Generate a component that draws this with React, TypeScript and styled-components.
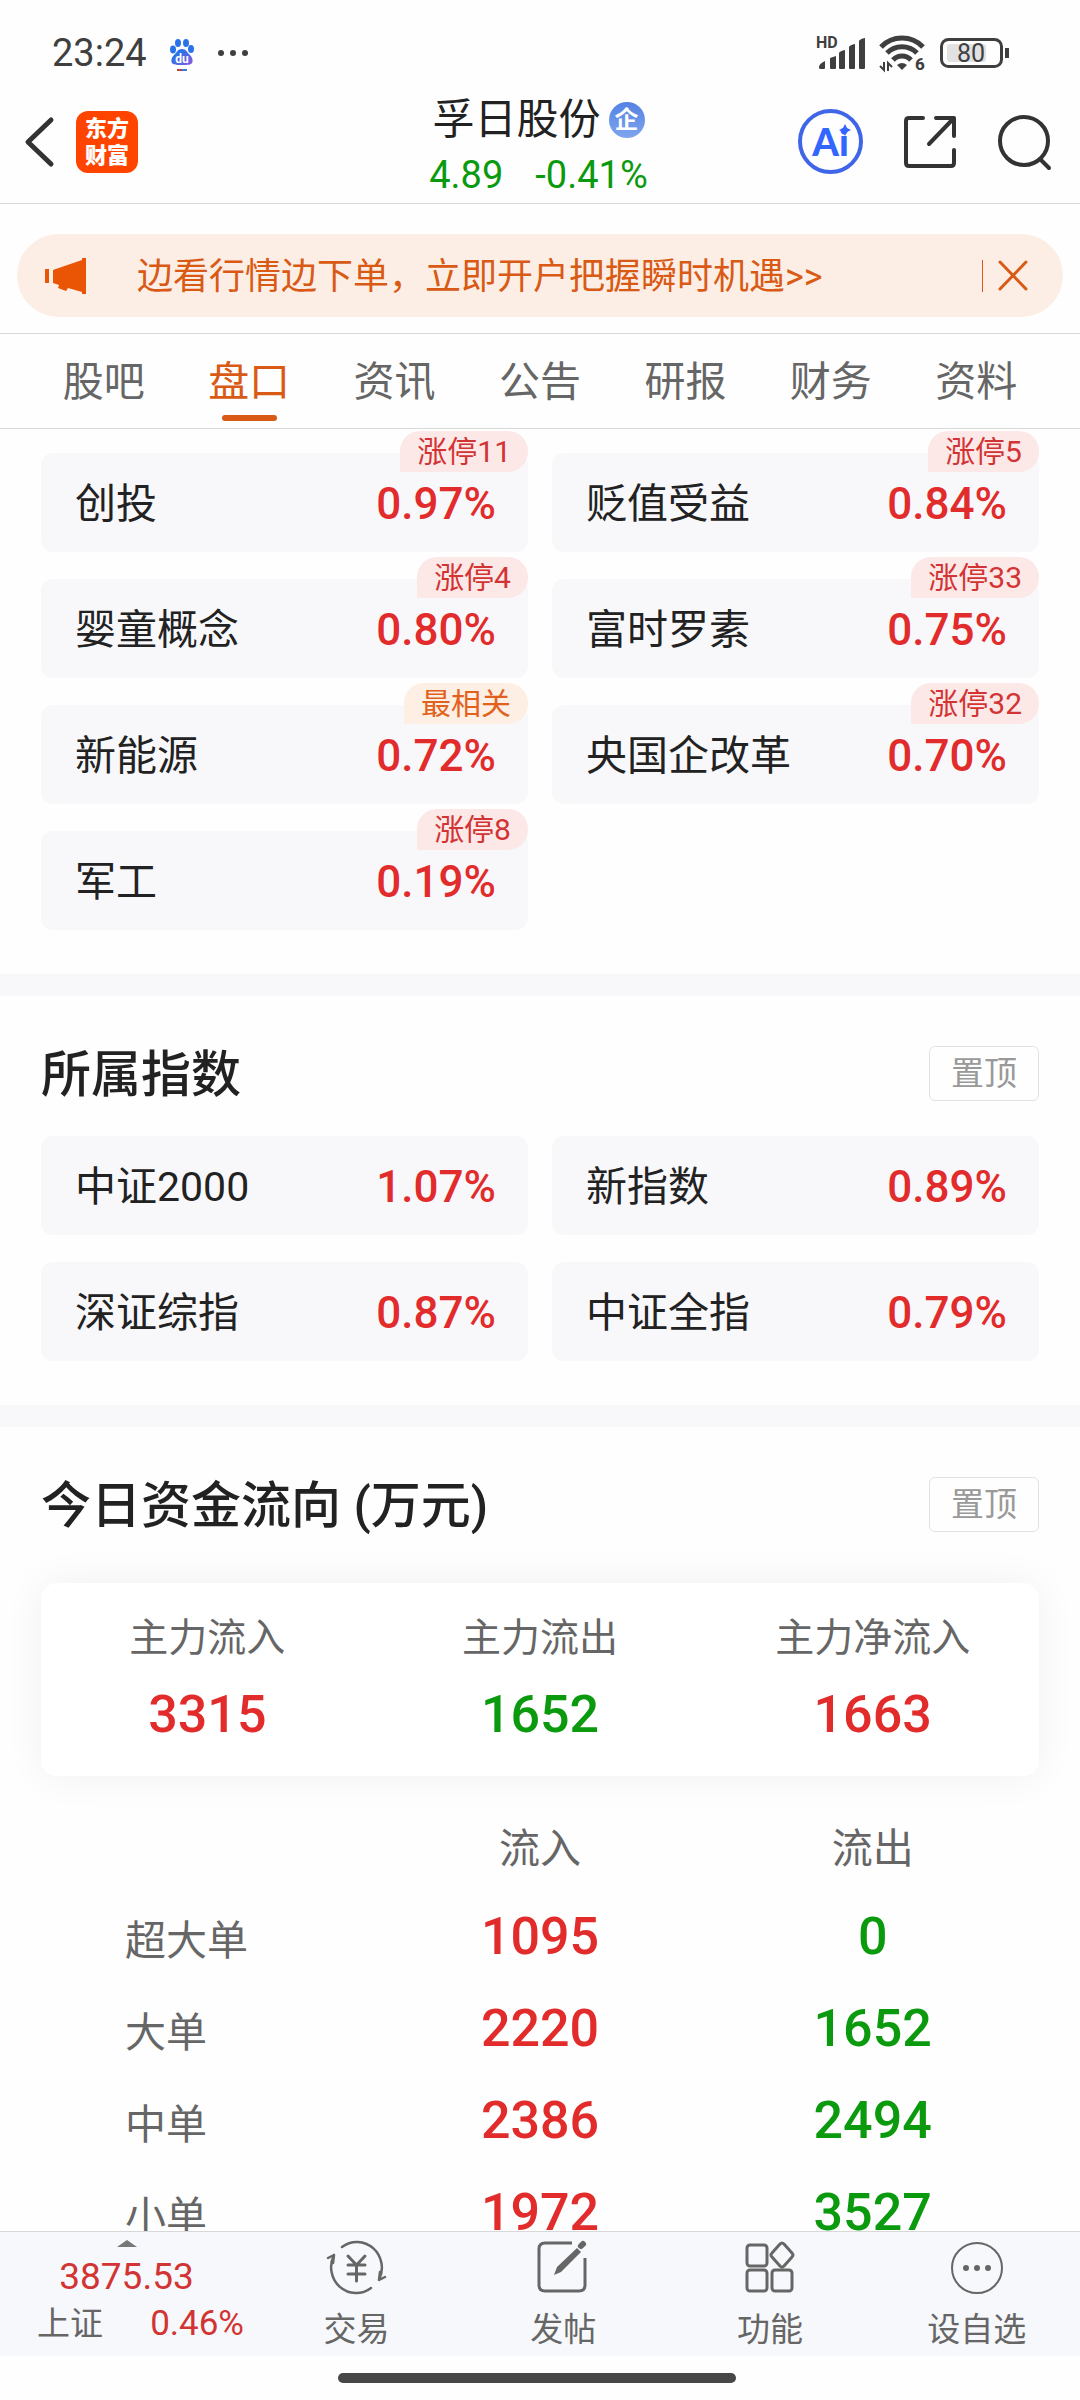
import React from "react";
import styled, { createGlobalStyle } from "styled-components";

const RED = "#e22b2b";
const GREEN = "#0b9a0e";
const ORANGE = "#d95a14";
const INK = "#222222";
const GREY = "#666666";
const PANEL = "#f8f8fb";
const LINE = "#d8d8d8";

type Tone = "up" | "down";
const toneColor = (tone: Tone) => (tone === "up" ? RED : GREEN);

const GlobalStyle = createGlobalStyle`
  * { box-sizing: border-box; }
  body {
    margin: 0;
    background: #fefefe;
    color: ${INK};
    font-family: Roboto, "Noto Sans CJK SC", sans-serif;
  }
  button { border: 0; padding: 0; background: none; font: inherit; color: inherit; cursor: pointer; }
  a { color: inherit; text-decoration: none; }
  h1, h2, p, dl, dd { margin: 0; font-weight: inherit; font-size: inherit; }
  svg { display: block; flex: none; overflow: visible; }
`;

const Screen = styled.div`
  display: flex;
  flex-direction: column;
  height: 100vh;
`;

const StatusBar = styled.div`
  display: flex;
  align-items: center;
  height: 92px;
  padding: 14px 71px 0 52px;
  color: #3f3f3f;
`;

const Clock = styled.time`
  font-size: 38px;
  line-height: 48px;
`;

const AppMark = styled.span`
  margin: 0 18px;
`;

const StatusIcons = styled.div`
  display: flex;
  align-items: center;
  gap: 12px;
  margin-left: auto;
`;

const Header = styled.header`
  display: grid;
  grid-template-columns: 1fr auto 1fr;
  padding: 0 27px 0 24px;
  border-bottom: 1px solid ${LINE};
`;

const HeaderSide = styled.div<{ $end?: boolean }>`
  display: flex;
  align-items: center;
  justify-content: ${(p) => (p.$end ? "flex-end" : "flex-start")};
  gap: ${(p) => (p.$end ? "40px" : "22px")};
  padding-bottom: 12px;
`;

const BrandLogo = styled.a`
  display: flex;
  flex-direction: column;
  align-items: center;
  justify-content: center;
  width: 62px;
  height: 62px;
  border-radius: 12px;
  background: #ff4400;
  color: #fff;
  font-size: 22px;
  font-weight: 900;
  line-height: 27px;
`;

const Quote = styled.div`
  display: flex;
  flex-direction: column;
  align-items: center;
`;

const StockName = styled.h1`
  display: flex;
  align-items: center;
  gap: 8px;
  font-size: 42px;
  line-height: 56px;
`;

const CompanyBadge = styled.span`
  width: 36px;
  height: 36px;
  border-radius: 50%;
  background: linear-gradient(#5482e4, #7fa5ec);
  color: #fff;
  font-size: 24px;
  font-weight: 700;
  line-height: 36px;
  text-align: center;
`;

const Price = styled.p`
  display: flex;
  gap: 32px;
  color: ${GREEN};
  font-size: 38px;
  line-height: 55px;
`;

const AiButton = styled.button`
  position: relative;
  width: 65px;
  height: 65px;
  border: 4px solid #3f66e8;
  border-radius: 50%;
  color: #3366ff;
  font-family: Lato, sans-serif;
  font-size: 38px;
  font-weight: 900;
  line-height: 57px;
  text-align: center;

  svg { position: absolute; top: 11px; right: 8px; }
`;

const BannerArea = styled.div`
  padding: 30px 17px 16px;
  border-bottom: 1px solid ${LINE};
`;

const Banner = styled.div`
  display: flex;
  align-items: center;
  height: 83px;
  padding: 0 35px 0 28px;
  border-radius: 42px;
  background: #fceee5;
  color: ${ORANGE};
`;

const BannerLink = styled.a`
  flex: 1;
  margin-left: 51px;
  padding-top: 3px;
  font-size: 36px;
  line-height: 54px;
`;

const BannerClose = styled.button`
  padding-left: 15px;
  border-left: 1px solid ${ORANGE};
`;

const Tabs = styled.nav`
  display: flex;
  height: 95px;
  padding: 0 31px;
  border-bottom: 1px solid ${LINE};
`;

const Tab = styled.a<{ $active: boolean }>`
  position: relative;
  flex: 1;
  color: ${(p) => (p.$active ? ORANGE : GREY)};
  font-size: 41px;
  line-height: 96px;
  text-align: center;

  &::after {
    content: "";
    display: ${(p) => (p.$active ? "block" : "none")};
    position: absolute;
    bottom: 7px;
    left: 50%;
    width: 55px;
    height: 6px;
    margin-left: -27px;
    border-radius: 3px;
    background: ${ORANGE};
  }
`;

const Content = styled.main`
  flex: 1;
  min-height: 0;
  overflow: hidden;
`;

const Section = styled.section<{ $first?: boolean }>`
  padding: ${(p) => (p.$first ? "24px" : "50px")} 41px 44px;

  & + & { border-top: 22px solid ${PANEL}; }
`;

const SectionHead = styled.div<{ $gap: number }>`
  display: flex;
  align-items: center;
  justify-content: space-between;
  margin-bottom: ${(p) => p.$gap}px;
`;

const SectionTitle = styled.h2`
  padding-top: 4px;
  font-size: 50px;
  font-weight: 500;
  line-height: 51px;
`;

const PinButton = styled.button`
  width: 110px;
  height: 55px;
  border: 1px solid #e2e2e2;
  border-radius: 6px;
  color: #999;
  font-size: 33px;
  line-height: 53px;
`;

const ChipGrid = styled.div`
  display: grid;
  grid-template-columns: 1fr 1fr;
  gap: 27px 24px;
`;

const Chip = styled.a`
  position: relative;
  display: flex;
  align-items: center;
  justify-content: space-between;
  height: 99px;
  padding: 2px 32px 0 34px;
  border-radius: 12px;
  background: ${PANEL};
  font-size: 41px;
  line-height: 58px;
`;

const ChipValue = styled.span`
  color: ${RED};
  font-size: 44px;
  font-weight: 500;
`;

const ChipBadge = styled.span<{ $related: boolean }>`
  position: absolute;
  top: -22px;
  right: 0;
  height: 41px;
  padding: 0 17px;
  border-radius: 20px 20px 20px 0;
  background: ${(p) => (p.$related ? "#feefe4" : "#fde8e8")};
  color: ${(p) => (p.$related ? "#e0621c" : "#d23434")};
  font-size: 30px;
  line-height: 41px;
`;

const FlowCard = styled.dl`
  display: grid;
  grid-template-columns: repeat(3, 1fr);
  height: 193px;
  padding-top: 26px;
  border-radius: 16px;
  background: #fff;
  box-shadow: 0 0 40px rgba(0, 0, 0, 0.06);
  text-align: center;
`;

const FlowLabel = styled.dt`
  color: ${GREY};
  font-size: 39px;
  line-height: 58px;
`;

const FlowValue = styled.dd<{ $tone: Tone }>`
  padding-top: 15px;
  color: ${(p) => toneColor(p.$tone)};
  font-size: 52px;
  font-weight: 500;
  line-height: 66px;
`;

const FlowTable = styled.table`
  width: 100%;
  margin-top: 23px;
  border-collapse: collapse;
  table-layout: fixed;
`;

const HeadCell = styled.th`
  height: 92px;
  padding: 0;
  color: ${GREY};
  font-size: 41px;
  font-weight: 400;
`;

const RowLabel = styled(HeadCell)`
  padding-left: 84px;
  text-align: left;
`;

const AmountCell = styled.td<{ $tone: Tone }>`
  height: 92px;
  padding: 0;
  color: ${(p) => toneColor(p.$tone)};
  font-size: 52px;
  font-weight: 500;
  line-height: 66px;
  text-align: center;
`;

const BottomBar = styled.nav`
  display: flex;
  height: 125px;
  border-top: 1px solid ${LINE};
  background: #f7f8fb;
  color: ${GREY};
`;

const IndexLink = styled.a`
  flex: 0 0 253px;
  padding-top: 8px;
`;

const IndexArrow = styled.svg`
  margin: 0 auto;
`;

const IndexPoints = styled.div`
  color: #d23434;
  font-size: 37px;
  line-height: 60px;
  text-align: center;
`;

const IndexRow = styled.div`
  display: flex;
  justify-content: space-between;
  padding: 0 9px 0 37px;
  font-size: 33px;
  line-height: 34px;
`;

const IndexChange = styled.span`
  color: #d23434;
  font-size: 35px;
`;

const Action = styled.button`
  display: flex;
  flex: 1;
  flex-direction: column;
  align-items: center;
  padding-top: 7px;
  font-size: 33px;
  line-height: 48px;

  svg { margin-bottom: 11px; }
`;

const HomeArea = styled.div`
  display: flex;
  justify-content: center;
  height: 44px;
  padding: 17px 6px 0 0;
`;

const HomeBar = styled.div`
  width: 37%;
  height: 10px;
  border-radius: 5px;
  background: #474747;
`;

const PawIcon = () => (
  <svg width="34" height="36" viewBox="0 0 34 36" aria-hidden="true">
    <defs>
      <linearGradient id="paw" x1="0" y1="0" x2="1" y2="1">
        <stop offset="0.3" stopColor="#2a72e8" />
        <stop offset="1" stopColor="#8a5be0" />
      </linearGradient>
    </defs>
    <g fill="#2a72e8">
      <ellipse cx="8" cy="14.500" rx="3" ry="4" />
      <ellipse cx="13" cy="8" rx="3" ry="4" />
      <ellipse cx="21" cy="8" rx="3" ry="4" />
      <ellipse cx="26" cy="14" rx="3" ry="4" />
    </g>
    <path d="M17 14c4 0 5 3 7 5 3 3 4 5 3.500 8-1 3-4 3-10.500 3s-9.500 0-10.500-3c-.5-3 .5-5 3.500-8 2-2 3-5 7-5z" fill="url(#paw)" />
    <text x="17" y="28" textAnchor="middle" fontSize="12" fontWeight="700" fill="#fff">du</text>
    <path d="M12 35h5" stroke="#b8434b" strokeWidth="2" />
    <path d="M17 35h5" stroke="#3f78d6" strokeWidth="2" />
  </svg>
);

const DotsIcon = () => (
  <svg width="32" height="8" viewBox="0 0 32 8" fill="#3f3f3f" aria-hidden="true">
    <circle cx="4" cy="4" r="3" />
    <circle cx="16" cy="4" r="3" />
    <circle cx="28" cy="4" r="3" />
  </svg>
);

const SignalIcon = () => (
  <svg width="50" height="34" viewBox="0 0 50 34" fill="#3f3f3f" aria-hidden="true">
    <text x="-1" y="12" fontSize="16" fontWeight="700">HD</text>
    <path d="M2 31q0-3 6-6v7q0 1-1 1H3q-1 0-1-2zM13 22l6-2v12q0 1-1 1h-4q-1 0-1-1zM22 17q1-2 6-3v18q0 1-1 1h-4q-1 0-1-1zM32 11q1-2 6-3v24q0 1-1 1h-4q-1 0-1-1zM42 5q1-2 6-3v30q0 1-1 1h-4q-1 0-1-1z" />
  </svg>
);

const WifiIcon = () => (
  <svg width="46" height="36" viewBox="0 0 46 36" aria-hidden="true">
    <g fill="none" stroke="#3f3f3f" strokeWidth="5">
      <path d="M2 12A29 29 0 0 1 44 12" />
      <path d="M8 18A21 21 0 0 1 38 18" />
      <path d="M14 25A12 12 0 0 1 32 25" />
    </g>
    <path d="M18 30q5-4 10 0l-5 5z" fill="#3f3f3f" />
    <path d="M5 27v8l-4-4M9 36v-8l4 4" fill="none" stroke="#3f3f3f" strokeWidth="2" />
    <text x="36" y="35" fontSize="17" fontWeight="800" fill="#3f3f3f">6</text>
  </svg>
);

const BatteryIcon = () => (
  <svg width="72" height="32" viewBox="-3 0 72 32" aria-label="80%">
    <rect x="7" y="7" width="39" height="18" rx="3" fill="#e2e2e2" />
    <rect x="1.500" y="2.500" width="60" height="27" rx="7" fill="none" stroke="#3f3f3f" strokeWidth="3" />
    <path d="M67 11v10" stroke="#3f3f3f" strokeWidth="4" />
    <text x="31" y="25" textAnchor="middle" fontSize="25" fill="#3f3f3f">80</text>
  </svg>
);

const BackIcon = () => (
  <svg width="30" height="52" viewBox="0 0 30 52" fill="none" stroke="#333" strokeWidth="5" strokeLinecap="round" strokeLinejoin="round">
    <path d="M27 4L4 26l23 22" />
  </svg>
);

const ShareIcon = () => (
  <svg width="54" height="54" viewBox="0 0 54 54" fill="none" stroke="#333" strokeWidth="4" strokeLinecap="round" strokeLinejoin="round">
    <path d="M20 3H6q-3 0-3 3v42q0 3 3 3h42q3 0 3-3V35M33 3h18v18M51 3L26 29" />
  </svg>
);

const SearchIcon = () => (
  <svg width="56" height="56" viewBox="0 0 56 56" fill="none" stroke="#333" strokeWidth="4" strokeLinecap="round">
    <circle cx="27" cy="27" r="24" />
    <path d="M43 45l9 9" />
  </svg>
);

const MegaphoneIcon = () => (
  <svg width="41" height="38" viewBox="0 0 41 38" fill="#e95504" aria-hidden="true">
    <path d="M0 12h4v14H0zM8 13l29-10V1h4v36h-4v-2l-14-4-2 3-8-3 1-3-6-2z" />
  </svg>
);

const CloseIcon = () => (
  <svg width="30" height="32" viewBox="0 0 30 32" fill="none" stroke={ORANGE} strokeWidth="3" strokeLinecap="round">
    <path d="M2 2l26 27M28 2L2 29" />
  </svg>
);

const stroke = { fill: "none", stroke: GREY, strokeWidth: 3, strokeLinecap: "round" as const, strokeLinejoin: "round" as const };

const TradeIcon = () => (
  <svg width="60" height="56" viewBox="0 0 60 56" {...stroke}>
    <path d="M16 8A25 26 0 0 1 53 41M53 41l1-8M53 41l6-3M45 49A25 26 0 0 1 8 16M8 16l-1 8M8 16l-6 3" strokeWidth="2.500" />
    <path d="M22 17l8.500 9 8.500-9M30.500 26v16M22 26h17M22 35h17" />
  </svg>
);

const PostIcon = () => (
  <svg width="52" height="56" viewBox="0 0 52 56" {...stroke}>
    <path d="M35 4H8q-6 0-6 6v36q0 6 6 6h34q6 0 6-6V19" strokeLinecap="butt" />
    <path d="M44 7l2-2" strokeWidth="6" />
    <path d="M17 36l3-8 20-19 4 4-20 20z" fill={GREY} stroke="none" />
  </svg>
);

const FeatureIcon = () => (
  <svg width="52" height="56" viewBox="0 0 52 56" {...stroke}>
    <rect x="3" y="6" width="20" height="21" rx="3" />
    <rect x="3" y="31" width="20" height="21" rx="3" />
    <rect x="28" y="31" width="20" height="21" rx="3" />
    <path d="M36 5q2-2 4 0l8 9q2 2 0 4l-8 9q-2 2-4 0l-8-9q-2-2 0-4z" />
  </svg>
);

const MoreIcon = () => (
  <svg width="54" height="56" viewBox="0 0 54 56" {...stroke} strokeWidth="2">
    <circle cx="27" cy="29" r="25" />
    <g fill={GREY} stroke="none">
      <circle cx="16" cy="29" r="3" />
      <circle cx="27" cy="29" r="3" />
      <circle cx="38" cy="29" r="3" />
    </g>
  </svg>
);

interface ChipData {
  name: string;
  change: string;
  badge?: string;
}

const concepts: ChipData[] = [
  { name: "创投", change: "0.97%", badge: "涨停11" },
  { name: "贬值受益", change: "0.84%", badge: "涨停5" },
  { name: "婴童概念", change: "0.80%", badge: "涨停4" },
  { name: "富时罗素", change: "0.75%", badge: "涨停33" },
  { name: "新能源", change: "0.72%", badge: "最相关" },
  { name: "央国企改革", change: "0.70%", badge: "涨停32" },
  { name: "军工", change: "0.19%", badge: "涨停8" },
];

const indexes: ChipData[] = [
  { name: "中证2000", change: "1.07%" },
  { name: "新指数", change: "0.89%" },
  { name: "深证综指", change: "0.87%" },
  { name: "中证全指", change: "0.79%" },
];

const totals: { label: string; value: string; tone: Tone }[] = [
  { label: "主力流入", value: "3315", tone: "up" },
  { label: "主力流出", value: "1652", tone: "down" },
  { label: "主力净流入", value: "1663", tone: "up" },
];

const orders = [
  { label: "超大单", inflow: "1095", outflow: "0" },
  { label: "大单", inflow: "2220", outflow: "1652" },
  { label: "中单", inflow: "2386", outflow: "2494" },
  { label: "小单", inflow: "1972", outflow: "3527" },
];

const tabs = ["股吧", "盘口", "资讯", "公告", "研报", "财务", "资料"];

const actions = [
  { label: "交易", icon: <TradeIcon /> },
  { label: "发帖", icon: <PostIcon /> },
  { label: "功能", icon: <FeatureIcon /> },
  { label: "设自选", icon: <MoreIcon /> },
];

const Chips = ({ items }: { items: ChipData[] }) => (
  <ChipGrid>
    {items.map((item) => (
      <Chip key={item.name} href="#">
        <span>{item.name}</span>
        <ChipValue>{item.change}</ChipValue>
        {item.badge && <ChipBadge $related={item.badge === "最相关"}>{item.badge}</ChipBadge>}
      </Chip>
    ))}
  </ChipGrid>
);

export default function App() {
  return (
    <Screen>
      <GlobalStyle />
      <StatusBar>
        <Clock>23:24</Clock>
        <AppMark><PawIcon /></AppMark>
        <DotsIcon />
        <StatusIcons>
          <SignalIcon />
          <WifiIcon />
          <BatteryIcon />
        </StatusIcons>
      </StatusBar>

      <Header>
        <HeaderSide>
          <button aria-label="返回"><BackIcon /></button>
          <BrandLogo href="#">
            <span>东方</span>
            <span>财富</span>
          </BrandLogo>
        </HeaderSide>
        <Quote>
          <StockName>
            孚日股份
            <CompanyBadge>企</CompanyBadge>
          </StockName>
          <Price>
            <span>4.89</span>
            <span>-0.41%</span>
          </Price>
        </Quote>
        <HeaderSide $end>
          <AiButton>
            Ai
            <svg width="12" height="12" viewBox="0 0 12 12" fill="#3366ff" aria-hidden="true">
              <path d="M6 0l2 4 4 2-4 2-2 4-2-4-4-2 4-2z" />
            </svg>
          </AiButton>
          <button aria-label="分享"><ShareIcon /></button>
          <button aria-label="搜索"><SearchIcon /></button>
        </HeaderSide>
      </Header>

      <BannerArea>
        <Banner>
          <MegaphoneIcon />
          <BannerLink href="#">边看行情边下单，立即开户把握瞬时机遇&gt;&gt;</BannerLink>
          <BannerClose aria-label="关闭"><CloseIcon /></BannerClose>
        </Banner>
      </BannerArea>

      <Tabs>
        {tabs.map((tab) => (
          <Tab key={tab} href="#" $active={tab === "盘口"}>{tab}</Tab>
        ))}
      </Tabs>

      <Content>
        <Section $first>
          <Chips items={concepts} />
        </Section>

        <Section>
          <SectionHead $gap={35}>
            <SectionTitle>所属指数</SectionTitle>
            <PinButton>置顶</PinButton>
          </SectionHead>
          <Chips items={indexes} />
        </Section>

        <Section>
          <SectionHead $gap={51}>
            <SectionTitle>今日资金流向 (万元)</SectionTitle>
            <PinButton>置顶</PinButton>
          </SectionHead>
          <FlowCard>
            {totals.map((total) => (
              <div key={total.label}>
                <FlowLabel>{total.label}</FlowLabel>
                <FlowValue $tone={total.tone}>{total.value}</FlowValue>
              </div>
            ))}
          </FlowCard>
          <FlowTable>
            <thead>
              <tr>
                <HeadCell as="td" />
                <HeadCell scope="col">流入</HeadCell>
                <HeadCell scope="col">流出</HeadCell>
              </tr>
            </thead>
            <tbody>
              {orders.map((order) => (
                <tr key={order.label}>
                  <RowLabel scope="row">{order.label}</RowLabel>
                  <AmountCell $tone="up">{order.inflow}</AmountCell>
                  <AmountCell $tone="down">{order.outflow}</AmountCell>
                </tr>
              ))}
            </tbody>
          </FlowTable>
        </Section>
      </Content>

      <BottomBar>
        <IndexLink href="#">
          <IndexArrow width="20" height="7" viewBox="0 0 20 7" fill="#777" aria-hidden="true">
            <path d="M0 7L10 0l10 7z" />
          </IndexArrow>
          <IndexPoints>3875.53</IndexPoints>
          <IndexRow>
            <span>上证</span>
            <IndexChange>0.46%</IndexChange>
          </IndexRow>
        </IndexLink>
        {actions.map((action) => (
          <Action key={action.label}>
            {action.icon}
            {action.label}
          </Action>
        ))}
      </BottomBar>
      <HomeArea>
        <HomeBar />
      </HomeArea>
    </Screen>
  );
}
